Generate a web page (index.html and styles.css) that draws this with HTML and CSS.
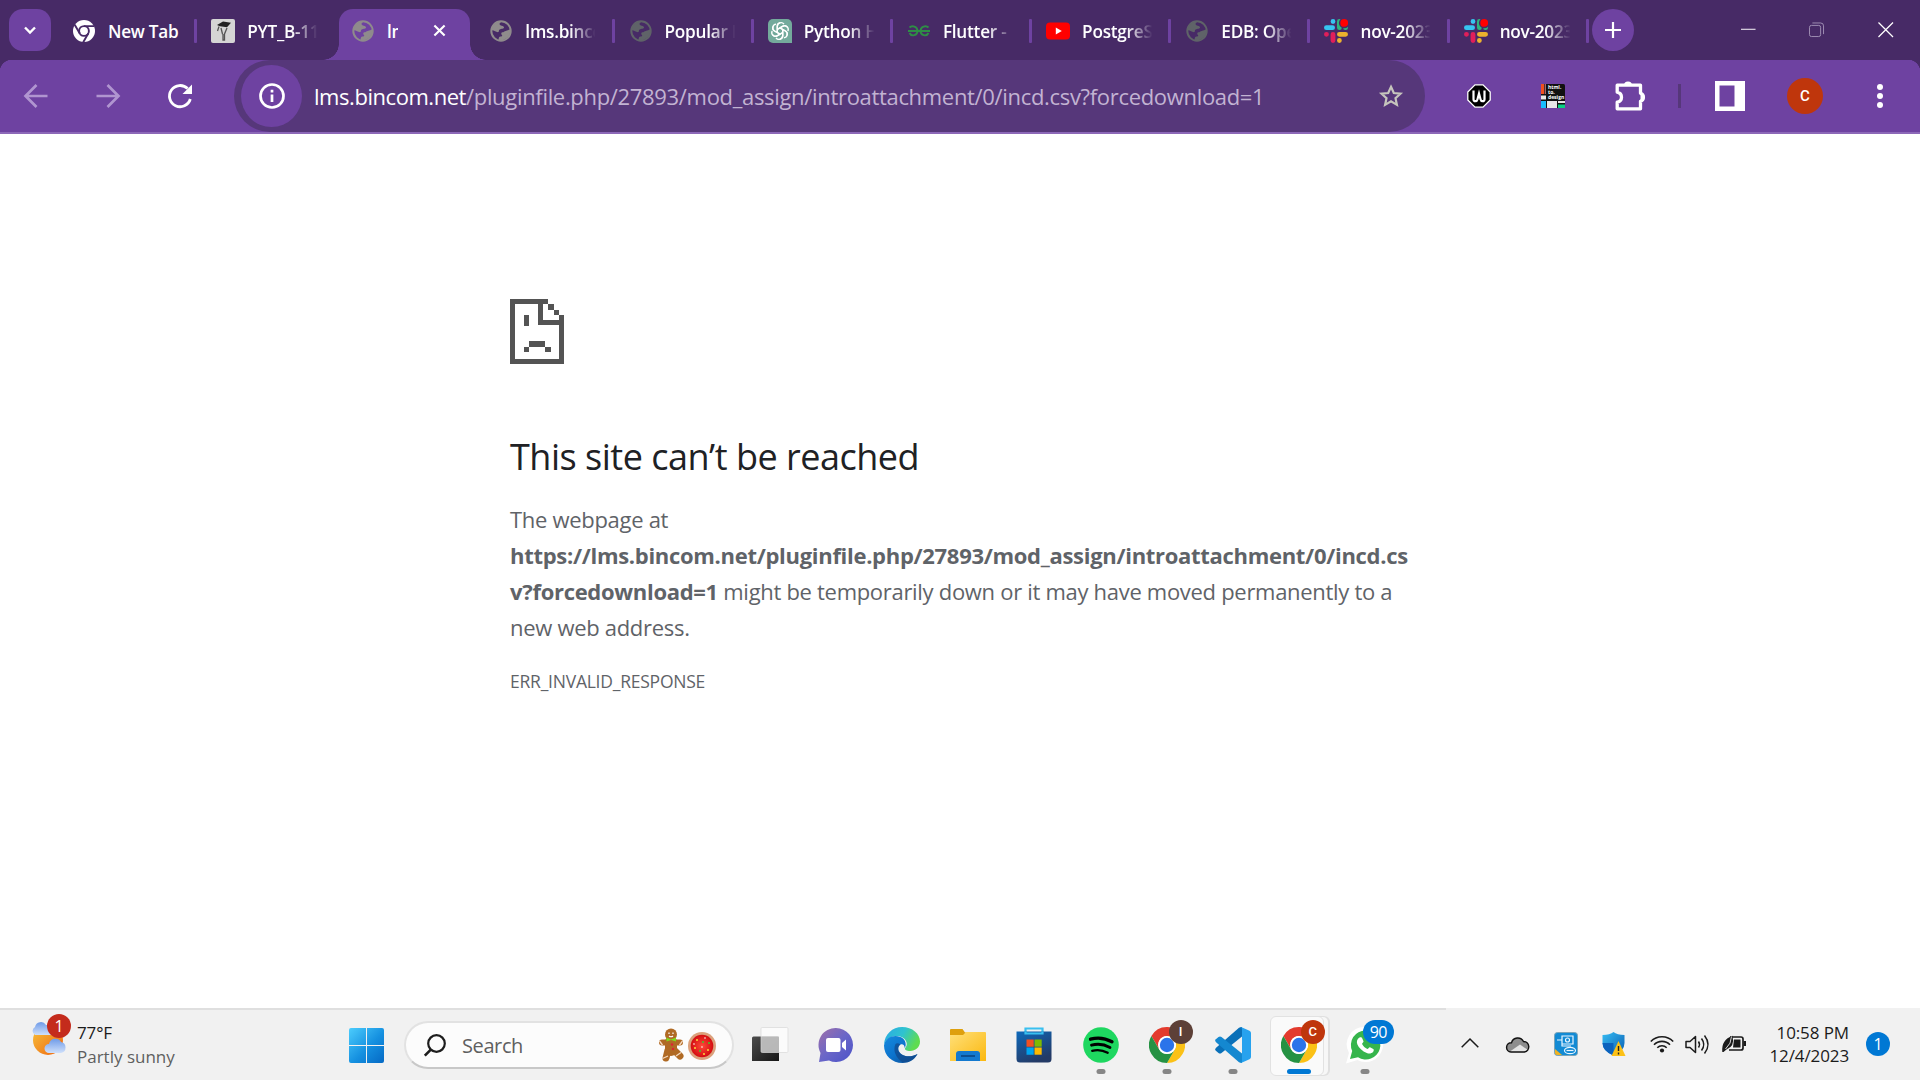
FILE: index.html
```html
<!DOCTYPE html>
<html lang="en">
<head>
<meta charset="utf-8">
<title>lms.bincom.net</title>
<link rel="stylesheet" href="styles.css">
</head>
<body>
<svg class="defs" width="0" height="0" aria-hidden="true">
  <defs>
    <linearGradient id="gWin" x1="0" y1="0" x2="1" y2="1"><stop offset="0" stop-color="#4ccdfd"/><stop offset=".55" stop-color="#1590e0"/><stop offset="1" stop-color="#0569c4"/></linearGradient>
    <linearGradient id="gSun" x1="0" y1="0" x2="1" y2="1"><stop offset="0" stop-color="#f7c33b"/><stop offset="1" stop-color="#ef6510"/></linearGradient>
    <linearGradient id="gCloud" x1="0" y1="0" x2="0" y2="1"><stop offset="0" stop-color="#6f9be8"/><stop offset="1" stop-color="#cfe0fb"/></linearGradient>
    <linearGradient id="gDark" x1="0" y1="0" x2="1" y2="1"><stop offset="0" stop-color="#4c4c4c"/><stop offset="1" stop-color="#161616"/></linearGradient>
    <linearGradient id="gTeams" x1="0" y1="0" x2="1" y2="1"><stop offset="0" stop-color="#a070a8"/><stop offset=".5" stop-color="#6a66c8"/><stop offset="1" stop-color="#4a52c8"/></linearGradient>
    <linearGradient id="gFolder" x1="0" y1="0" x2="1" y2="1"><stop offset="0" stop-color="#ffe07a"/><stop offset="1" stop-color="#fbb80f"/></linearGradient>
    <linearGradient id="gStore" x1="0" y1="0" x2=".5" y2="1"><stop offset="0" stop-color="#0d69bb"/><stop offset="1" stop-color="#243a66"/></linearGradient>
    <linearGradient id="gEdgeA" x1="0" y1="0" x2="1" y2=".4"><stop offset="0" stop-color="#2aa9e6"/><stop offset=".55" stop-color="#2fc3cf"/><stop offset="1" stop-color="#5fdc50"/></linearGradient>
    <linearGradient id="gEdgeB" x1="0" y1="0" x2="1" y2="1"><stop offset="0" stop-color="#168ade"/><stop offset=".5" stop-color="#0c72cc"/><stop offset="1" stop-color="#114a8b"/></linearGradient>
    <linearGradient id="gShield" x1="0" y1="0" x2="1" y2="1"><stop offset="0" stop-color="#36bdf3"/><stop offset="1" stop-color="#0a5cb2"/></linearGradient>
    <radialGradient id="gCookie"><stop offset="0" stop-color="#ff4a3a"/><stop offset="1" stop-color="#d40d10"/></radialGradient>
    <symbol id="globe" viewBox="0 0 22 22"><circle cx="11" cy="11" r="9.7" fill="none" stroke="currentColor" stroke-width="2"/><path d="M12.8 1.6C10 2 8.6 4 10.4 5.2c1.6 1 3.4.5 3.6 2.2.2 1.5-2.6 1.4-4.3 2-1.4.6-.2 2.200-1.5 2.700C6.500 12.700 4.600 10.200 1.500 10.300A9.600 9.600 0 0 1 12.800 1.600ZM20.400 9.600c-1.700 0-2.800 1.300-4.600 1.300-1.600 0-2 1.300-3.500 1.400-1.500.2-1.100 2.100-.4 2.800.8.900-.3 1.500-1.400 1.400-1.400-.1-2 1.400-1.800 3.500A9.700 9.700 0 0 0 20.400 9.600Z" fill="currentColor"/></symbol>
    <symbol id="slack" viewBox="0 0 24 24"><g stroke-width="4.8" stroke-linecap="round"><path d="M2.400 8.700h6.200M9 2.500v.1" stroke="#36c5f0"/><path d="M15.400 2.400v6.300M21.500 8.700h.1" stroke="#2eb67d"/><path d="M15.400 15.300h6.200M15.400 21.500v.1" stroke="#ecb22e"/><path d="M9 15.300v6.300M2.400 15.300h.1" stroke="#e01e5a"/></g><circle cx="20.200" cy="3.900" r="5.300" fill="#472a66"/><circle cx="20.200" cy="3.900" r="3.900" fill="#f00"/></symbol>
    <symbol id="chrome" viewBox="0 0 36 36"><path d="M2.410 9A18 18 0 0 1 33.590 9H18A9 9 0 0 0 10.200 13.500l0 9Z" fill="#e33b2e"/><path d="M33.590 9A18 18 0 0 1 18 36L25.800 22.500A9 9 0 0 0 25.800 13.500L18 9Z" fill="#fbc116"/><path d="M18 36A18 18 0 0 1 2.410 9L10.200 22.500A9 9 0 0 0 25.800 22.500Z" fill="#259243"/><circle cx="18" cy="18" r="9" fill="#fff"/><circle cx="18" cy="18" r="7.200" fill="#2b74ea"/></symbol>
  </defs>
</svg>

<header class="tabstrip">
  <div class="tab-search"><svg width="14" height="14" viewBox="0 0 14 14"><path d="m2 4.500 5 5 5-5" fill="none" stroke="#fff" stroke-width="2.400"/></svg></div>
  <nav class="tabs">
    <div class="tab"><svg class="fav" viewBox="0 0 22 22"><circle cx="11" cy="11" r="11" fill="#fff"/><g stroke="#472a66" stroke-width="1.900" fill="none"><circle cx="11" cy="11" r="4.900"/><path d="M11 6.100h10M6.800 13.500 1.700 4.700M15.200 13.500l-5 8.700"/></g></svg><span class="label full">New Tab</span></div>
    <div class="tab no-sep"><svg class="fav big" viewBox="0 0 24 24"><rect width="24" height="24" rx="2" fill="#d5d5d5"/><path d="m6 6 6-3.500 8 1.200-4 4.600-7-1Z" fill="#222"/><path d="M8 7.500 6.500 12M10 9l1.500 6M16 9l-2.500 6v6h-1.500v-6" stroke="#555" stroke-width="1.300" fill="none"/></svg><span class="label">PYT_B-11</span></div>
    <div class="tab active"><svg class="fav light"><use href="#globe"/></svg><span class="label tiny">lms</span><svg class="close" viewBox="0 0 14 14"><path d="m1.500 1.500 11 11m0-11-11 11" stroke="#fff" stroke-width="2.300"/></svg></div>
    <div class="tab"><svg class="fav light"><use href="#globe"/></svg><span class="label">lms.bincom</span></div>
    <div class="tab"><svg class="fav dim"><use href="#globe"/></svg><span class="label">Popular M</span></div>
    <div class="tab"><svg class="fav big" viewBox="0 0 24 24"><path d="M5 0h14a5 5 0 0 1 5 5v19H5a5 5 0 0 1-5-5V5a5 5 0 0 1 5-5Z" fill="#74aa9c"/><g fill="none" stroke="#fff" stroke-width="1.350"><path id="petal" d="M9.300 13.700V7.400a3.700 3.700 0 0 1 6.700-2.200M9.300 10.400l5.500-3.200a3.700 3.700 0 0 1 4.600.9"/><use href="#petal" transform="rotate(60 12 12)"/><use href="#petal" transform="rotate(120 12 12)"/><use href="#petal" transform="rotate(180 12 12)"/><use href="#petal" transform="rotate(240 12 12)"/><use href="#petal" transform="rotate(300 12 12)"/></g></svg><span class="label">Python H</span></div>
    <div class="tab"><svg class="fav" viewBox="0 0 22 22"><path d="M1.500 7.500C4 5 9.500 6.500 9.500 11S3.500 17 1.500 13M20.500 7.500C18 5 12.500 6.500 12.500 11s6 6 8 2M0 11h22" fill="none" stroke="#2f8d46" stroke-width="1.900"/></svg><span class="label">Flutter - </span></div>
    <div class="tab"><svg class="fav big" viewBox="0 0 24 24"><rect y="3.500" width="24" height="17" rx="4" fill="#f00"/><path d="m9.800 8.400 6 3.600-6 3.600Z" fill="#fff"/></svg><span class="label">PostgreSQ</span></div>
    <div class="tab"><svg class="fav dim"><use href="#globe"/></svg><span class="label">EDB: Open</span></div>
    <div class="tab"><svg class="fav big"><use href="#slack"/></svg><span class="label">nov-2023</span></div>
    <div class="tab"><svg class="fav big"><use href="#slack"/></svg><span class="label">nov-2023</span></div>
  </nav>
  <div class="new-tab"><svg width="16" height="16" viewBox="0 0 16 16"><path d="M8 0v16M0 8h16" stroke="#fff" stroke-width="2.200"/></svg></div>
  <div class="window-controls">
    <svg viewBox="0 0 16 16"><path d="M0 7.500h15" stroke="#fff" stroke-width="1"/></svg>
    <svg viewBox="0 0 16 16"><g fill="none" stroke="#a08fb5"><rect x=".5" y="3.500" width="11.500" height="11.500" rx="2"/><path d="M3.500 1H12q3 0 3 3v8.500"/></g></svg>
    <svg viewBox="0 0 16 16"><path d="m.5.500 15 15m0-15-15 15" stroke="#fff" stroke-width="1.300"/></svg>
  </div>
</header>

<section class="toolbar">
  <div class="nav-buttons">
    <svg viewBox="0 0 24 24"><path d="M23.500 12H2M12.500 1 1.500 12l11 11" fill="none" stroke="#b095d0" stroke-width="2.700"/></svg>
    <svg viewBox="0 0 24 24"><path d="M.5 12H22M11.500 1l11 11-11 11" fill="none" stroke="#b095d0" stroke-width="2.700"/></svg>
    <svg viewBox="0 0 24 24"><path d="M22.300 15A10.600 10.600 0 1 1 19.600 4.600" fill="none" stroke="#fff" stroke-width="2.800"/><path d="M24 .5v9.500h-9.500Z" fill="#fff"/></svg>
  </div>
  <div class="omnibox">
    <div class="site-info"><svg width="26" height="26" viewBox="0 0 26 26"><circle cx="13" cy="13" r="11.500" fill="none" stroke="#fff" stroke-width="2.700"/><path d="M13 11.500v7.500M13 6.800v2.700" stroke="#fff" stroke-width="2.700"/></svg></div>
    <span class="url"><span class="host">lms.bincom.net</span>/pluginfile.php/27893/mod_assign/introattachment/0/incd.csv?forcedownload=1</span>
    <svg class="star" viewBox="0 0 24 24"><path d="m12 2.800 2.800 6.200 6.700.7-5 4.500 1.400 6.700-5.900-3.500-5.900 3.500 1.400-6.700-5-4.500 6.700-.7Z" fill="none" stroke="#c6c5bd" stroke-width="2.200"/></svg>
  </div>
  <div class="extensions">
    <svg width="24" height="24" viewBox="0 0 24 24"><path d="M8 .8h8L23.200 8v8L16 23.200H8L.8 16V8Z" fill="#000" stroke="#fff" stroke-width="1.300"/><path d="M6.500 6.500v8.700q0 2 2 2 1.500 0 2-2L12 9.500l1.500 5.700q.5 2 2 2 2 0 2-2V6.500" fill="none" stroke="#fff" stroke-width="2.200"/></svg>
    <svg class="h2d" width="24" height="24" viewBox="0 0 24 24"><rect width="24" height="24" rx="1.500" fill="#111"/><path d="M0 0h3v10H0Z" fill="#f24e1e"/><path d="M3.600 0H5v10H3.600Z" fill="#a66"/><path d="M0 11.500h5v4H0ZM6 17h10v7H6ZM17 17h7v2h-7Z" fill="#e6e6e6"/><path d="M0 17h5v7H0Z" fill="#1abcfe"/><path d="M17 20.500h7V24h-7Z" fill="#0acf83"/><text x="7" y="5.200">html.</text><text x="7" y="9.800">to.</text><text x="7" y="14.800">design</text></svg>
    <svg width="30" height="30" viewBox="0 0 30 30"><path d="M3 4.200h22.500v8a4.200 4.200 0 0 1 0 8v7.600H2.200v-6.600q4.300-1 4.300-5t-4.300-5V4.200Z" fill="none" stroke="#fff" stroke-width="3.300" stroke-linejoin="round"/><path d="M9 4.500a4 4 0 0 1 8 0ZM25.500 12.200a4 4 0 0 1 0 8Z" fill="#fff"/></svg>
  </div>
  <div class="divider"></div>
  <div class="profile">
    <svg width="30" height="30" viewBox="0 0 30 30"><path fill="#fff" fill-rule="evenodd" d="M0 0h30v30H0ZM4.500 4.500v21h15v-21Z"/></svg>
    <span class="avatar">C</span>
    <svg width="6" height="24" viewBox="0 0 6 24"><g fill="#fff"><circle cx="3" cy="3" r="3"/><circle cx="3" cy="12" r="3"/><circle cx="3" cy="21" r="3"/></g></svg>
  </div>
</section>

<main class="page">
  <article class="error">
    <svg class="sad" viewBox="0 0 54 65" shape-rendering="crispEdges"><path fill="#545454" fill-rule="evenodd" d="M0 0h38v5h-5v16h16v-5h5v49H0ZM5 5v55h44V26H28V5Z"/><path fill="#545454" d="M38 5h5.500v5.500H38ZM43.500 10.500H49V16h-5.500ZM13.500 16H19v10.500h-5.500ZM19 42h16v5.500H19ZM13.500 47.500H19V53h-5.500ZM35 47.500h5.500V53H35Z"/></svg>
    <h1>This site can’t be reached</h1>
    <p class="message">The webpage at<br><strong>https://lms.bincom.net/pluginfile.php/27893/mod_assign/introattachment/0/incd.cs<br>v?forcedownload=1</strong> might be temporarily down or it may have moved permanently to a<br>new web address.</p>
    <p class="code">ERR_INVALID_RESPONSE</p>
  </article>
</main>

<footer class="taskbar">
  <div class="weather">
    <div class="weather-icon">
      <svg width="40" height="40" viewBox="0 0 40 40"><circle cx="18" cy="19" r="15" fill="url(#gSun)"/><path d="M5 14a4.500 4.500 0 0 1 0-8A6 6 0 0 1 16 4a5 5 0 0 1 6 5v5Z" fill="url(#gCloud)"/><path d="M19 32a4.500 4.500 0 0 1 0-9 6.500 6.500 0 0 1 12-2 5.600 5.600 0 0 1 0 11Z" fill="url(#gCloud)"/></svg>
      <span class="badge red">1</span>
    </div>
    <div class="weather-text"><span>77°F</span><span class="muted">Partly sunny</span></div>
  </div>
  <svg class="start" width="35" height="35" viewBox="0 0 35 35"><path fill="url(#gWin)" d="M2 0h15v17H0V2Q0 0 2 0ZM18 0h15q2 0 2 2v15H18ZM0 18h17v17H2q-2 0-2-2ZM18 18h17v15q0 2-2 2H18Z"/></svg>
  <div class="search">
    <svg width="22" height="23" viewBox="0 0 22 23"><circle cx="12.500" cy="9.500" r="8.300" fill="none" stroke="#1d1d1d" stroke-width="2.200"/><path d="m6.800 15.600-6 6" stroke="#1d1d1d" stroke-width="2.600"/></svg>
    <span>Search</span>
    <svg width="60" height="34" viewBox="0 0 60 34"><g stroke="#b06a24" stroke-linecap="round"><circle cx="13" cy="6.500" r="6" fill="#b06a24" stroke="none"/><path d="M4 14.500h18" stroke-width="6"/><path d="M13 14v8" stroke-width="12"/><path d="m10 22-2 8M16 22l6 6" stroke-width="7"/></g><path d="M4.500 30.500 10 28M18 28l5-3.500M1.500 13l3 4M24.500 13l-3 4" stroke="#f3d9c0" stroke-width="1.300"/><path d="m8.500 9.500 4.500 2 5-2v4l-5-1.500-4.500 1.500Z" fill="#7fdc1c"/><path d="M11 4.500v1.500M15 4.500v1.500M11 8q2 1.500 4 0" stroke="#fff" fill="none" stroke-width="1.200"/><circle cx="14" cy="16.500" r="1.200" fill="#d23"/><circle cx="15" cy="21" r="1.200" fill="#d23"/><circle cx="44" cy="18" r="14" fill="#dba17c"/><circle cx="44" cy="18" r="11.300" fill="url(#gCookie)"/><g fill="#ffd83b"><circle cx="39" cy="12" r="1"/><circle cx="50" cy="22" r="1"/><circle cx="37" cy="20" r="1"/><circle cx="46" cy="26" r="1"/></g><g fill="#45c72b"><circle cx="45" cy="14" r="1"/><circle cx="42" cy="23" r="1"/><circle cx="51" cy="15" r="1"/></g><g fill="#fff"><circle cx="47" cy="10" r=".8"/><circle cx="44" cy="19" r=".8"/><circle cx="36" cy="16" r=".8"/></g></svg>
  </div>
  <div class="apps">
    <div class="app"><svg viewBox="0 0 36 36"><path d="M0 11q0-1.500 1.500-1.500h24q1.500 0 1.500 1.500v23H0Z" fill="url(#gDark)"/><rect x="9" y=".5" width="27" height="25" rx="1.200" fill="#fff" fill-opacity=".7" stroke="#d8d8d8" stroke-width=".7"/><path d="M9.400 9.500H27v15.500H9.400Z" fill="#b5b5b5" opacity=".7"/></svg></div>
    <div class="app"><svg viewBox="0 0 36 36"><path d="M18 1a17 17 0 1 1-7 32.500L1 35l1.500-9A17 17 0 0 1 18 1Z" fill="url(#gTeams)"/><rect x="8" y="11" width="14.500" height="14" rx="2" fill="#fff"/><path d="m24 16 4-3.500v11L24 20Z" fill="#fff"/></svg></div>
    <div class="app"><svg viewBox="0 0 36 36"><path d="M0 18C.5 7 8.500 0 18 0c10.500 0 18 7 18 14.500 0 6-5 9.500-9.500 9.500-4.500 0-6-1.500-5.500-2.700C26 16 20 8.500 12 9 6 9.300 1.500 13 0 18Z" fill="url(#gEdgeA)"/><path d="M0 18.500C1 12 6.500 9 11.500 9c6.500 0 10.200 4 10.200 8.500 0 1.500-.5 2.800-1.200 3.500.5-3-2-4.500-4-3.500-2 1.200-3 4-1.500 7 2.500 5 11 6.500 18.500 2.500C30.500 33 25 36 18.500 36 8 36 0 28.500 0 18.500Z" fill="url(#gEdgeB)"/><path d="M11.500 17c-3 6.500.5 14 7.500 18.500 6-.5 11.500-3.500 14.500-8.500-7.500 4-16 2.500-18.500-2.500-1.500-3-.5-5.800 1.500-7-2-1.500-4-1.500-5-.5Z" fill="#124a8c" opacity=".75"/></svg></div>
    <div class="app"><svg viewBox="0 0 36 36"><path d="M0 3q0-1 1-1h11.500l2.500 3.500H34q2 0 2 2V10H0Z" fill="#dea00e"/><path d="M0 8h13l3-3h19q1 0 1 1v28H0Z" fill="url(#gFolder)"/><path d="M6 34v-7q0-3 3-3h18q3 0 3 3v7Z" fill="#1379cf"/><path d="M11 29h14" stroke="#0b4f92" stroke-width="2"/></svg></div>
    <div class="app"><svg viewBox="0 0 36 36"><path d="M9.500 7V1.500h17V7" fill="none" stroke="#39c0f0" stroke-width="2.200"/><path d="M.5 4.500h35V32q0 3.500-3.500 3.500H4Q.5 35.500.5 32Z" fill="url(#gStore)"/><path d="M9.500 4.500V6.500h17V4.500" fill="none" stroke="#39c0f0" stroke-width="2.200"/><path d="M10.500 12.500h7.200v7.200h-7.200Z" fill="#f25022"/><path d="M18.500 12.500h7.200v7.200h-7.200Z" fill="#7fba00"/><path d="M10.500 20.500h7.200v7.200h-7.200Z" fill="#00a4ef"/><path d="M18.500 20.500h7.200v7.200h-7.200Z" fill="#ffb900"/></svg></div>
    <div class="app running"><svg viewBox="0 0 36 36"><circle cx="18" cy="18" r="17.800" fill="#1ed760"/><g fill="none" stroke="#000" stroke-linecap="round"><path d="M7.500 12.200q11-3.200 21.500 2.600" stroke-width="3.300"/><path d="M8.500 18.200q9.500-2.700 18.500 2.300" stroke-width="2.800"/><path d="M9.200 23.800q8-2.200 15.500 2" stroke-width="2.300"/></g></svg></div>
    <div class="app running"><svg><use href="#chrome"/></svg><span class="badge brown">I</span></div>
    <div class="app running"><svg viewBox="0 0 36 36"><path d="M27 0v9.500L6.500 26q-1.500 1.200-3 0L.8 23.800q-1.500-1.300 0-2.800L24 .8Q25.500-.2 27 0Z" fill="#0a70b8"/><path d="M27 36v-9.500L6.500 10q-1.500-1.200-3 0L.8 12.200q-1.500 1.300 0 2.800L24 35.200q1.500 1 3 .8Z" fill="#1488d0"/><path d="m26 0 8.500 3.800q1.500.7 1.500 2.200v24q0 1.500-1.500 2.200L26 36q1-1 1-2.500v-31Q27 1 26 0Z" fill="#27a2ee"/></svg></div>
    <div class="app current"><svg><use href="#chrome"/></svg><span class="badge orange">C</span></div>
    <div class="app running"><svg viewBox="0 0 36 36"><path d="M18.500 0a17.500 17.500 0 1 1-8 33L-1 36.500 2 26A17.500 17.500 0 0 1 18.500 0Z" fill="#fff"/><path d="M18.500 3.500a14.500 14.500 0 1 1-7.500 26.700L3 32l2.200-8A14.500 14.500 0 0 1 18.500 3.500Z" fill="#36b54c"/><path d="M12.500 10.500c1.300-.7 2.300-.3 2.800 1l1.200 2.800c.3 1-1.700 2.200-1.400 2.800 1 2.200 3 4 5.200 5 .8.200 1.800-2.200 2.700-1.800l3.200 1.700c1 .6.600 2-.2 3-1.500 1.500-3.700 2-6.200 1-4.500-1.700-8-5-9.500-8.700-1-2.700-.3-5.300 2.200-6.800Z" fill="#fff"/></svg><span class="badge count">90</span></div>
  </div>
  <div class="tray">
    <svg class="up" width="18" height="10" viewBox="0 0 18 10"><path d="m.7 9.300 8.300-8.300 8.300 8.300" fill="none" stroke="#1b1b1b" stroke-width="1.500"/></svg>
    <svg class="cloud" width="24" height="17" viewBox="0 0 24 17"><path d="M5 16a4.500 4.500 0 0 1 .5-9.300A6.500 6.500 0 0 1 17.500 5.500 5.300 5.300 0 0 1 18.500 16Z" fill="#8e8e8e"/><path d="M4 15.500 14 8.500l8 5.500-4 2H5Z" fill="#e4e4e4"/><path d="M5 16a4.500 4.500 0 0 1 .5-9.300A6.500 6.500 0 0 1 17.500 5.500 5.300 5.300 0 0 1 18.500 16Z" fill="none" stroke="#111" stroke-width="1.400"/></svg>
    <svg class="intel" width="24" height="24" viewBox="0 0 24 24"><rect x=".5" y=".5" width="23" height="23" rx="3" fill="#128ad4" stroke="#7ba4b8"/><path d="M1 17l7 6H3q-2 0-2-2Z" fill="#f0b323"/><g fill="none" stroke="#e9f6ff" stroke-width="1.200"><path d="M8 4h11v8H8ZM3 8h5v6h9"/><circle cx="13.500" cy="8" r="2"/><ellipse cx="16" cy="18.500" rx="5.500" ry="3.200"/><path d="M12.500 18.500h7"/></g></svg>
    <svg class="shield" width="24" height="24" viewBox="0 0 24 24"><path d="M11.500 0Q15 3 22.500 3v8q0 8-11 12.500Q.5 19 .5 11V3Q8 3 11.500 0Z" fill="url(#gShield)"/><path d="M.5 11h11v12.500Q.5 19 .5 11Z" fill="#0b62bd"/><path d="m16.500 9 7 15h-14Z" fill="#fdc116"/><path d="M16.500 14v5M16.500 20.500v2" stroke="#222" stroke-width="1.400"/></svg>
    <svg class="wifi" width="24" height="18" viewBox="0 0 24 18"><g fill="none" stroke="#1b1b1b" stroke-width="1.600"><path d="M.8 6.500a15.500 15.500 0 0 1 22.400 0M4 9.800a11 11 0 0 1 16 0M7.300 12.800a6.500 6.500 0 0 1 9.400 0"/></g><circle cx="12" cy="15.500" r="2.100" fill="#1b1b1b"/></svg>
    <svg class="sound" width="24" height="21" viewBox="0 0 24 21"><g fill="none" stroke="#1b1b1b" stroke-width="1.500" stroke-linejoin="round"><path d="M1 7.500h4l5.500-5v16L5 13.500H1ZM13.500 7.500q2 3 0 6M16.500 4.500q4.500 6 0 12M19.500 1.500q7 9 0 18"/></g></svg>
    <svg class="battery" width="24" height="18" viewBox="0 0 24 18"><path d="M8 2h11q2 0 2 2v9q0 2-2 2H7" fill="none" stroke="#1b1b1b" stroke-width="1.700"/><path d="M12 4.500h6.500v8H11ZM21.500 6H24v5h-2.500Z" fill="#1b1b1b"/><path d="M.3 17Q-1 5 10.500.8 13 11.500 4.500 14.500L1.500 17Z" fill="#1b1b1b"/><path d="M9.500 1.500q0 7-6 12.500" fill="none" stroke="#f1f1f1" stroke-width=".9"/></svg>
    <div class="clock"><span>10:58 PM</span><span>12/4/2023</span></div>
    <span class="badge blue">1</span>
  </div>
</footer>
</body>
</html>
```
FILE: styles.css
```css
* { box-sizing: border-box; }
body {
  margin: 0;
  width: 1920px;
  height: 1080px;
  overflow: hidden;
  display: flex;
  flex-direction: column;
  background: #fff;
  font-family: "Open Sans", "Noto Sans", sans-serif;
}
.defs { position: absolute; }
svg { display: block; flex: none; overflow: visible; }

/* Tab strip */
.tabstrip {
  height: 60px;
  flex: none;
  display: flex;
  align-items: flex-start;
  padding: 9px 27px 0 9px;
  background: #472a66;
}
.tab-search, .new-tab {
  width: 42px;
  height: 42px;
  flex: none;
  display: grid;
  place-items: center;
  border-radius: 14px;
  background: #6e42a1;
}
.tab-search { margin-right: 7px; }
.new-tab { border-radius: 50%; margin-left: 3px; }
.tabs { display: flex; }
.tab {
  width: 139.2px;
  height: 51px;
  position: relative;
  display: flex;
  align-items: center;
  padding: 0 0 8px 50px;
}
.tab::after {
  content: "";
  position: absolute;
  right: 0;
  top: 10px;
  width: 3px;
  height: 24px;
  border-radius: 1px;
  background: #6e42a1;
}
.tab.no-sep::after { display: none; }
.fav { width: 22px; height: 22px; margin-left: -35px; margin-right: 13px; }
.fav.big { width: 24px; height: 24px; margin-left: -36px; margin-right: 12px; }
.light { color: #8f8b8c; }
.dim { color: #5f6368; }
.label {
  width: 72px;
  overflow: hidden;
  white-space: nowrap;
  color: #fff;
  font-size: 17.2px;
  font-weight: 600;
  letter-spacing: -0.25px;
  line-height: 24px;
  padding-top: 2px;
  -webkit-mask-image: linear-gradient(90deg, #000 62%, transparent 98%);
  mask-image: linear-gradient(90deg, #000 62%, transparent 98%);
}
.label.full { -webkit-mask-image: none; mask-image: none; }
.label.tiny { width: 11px; -webkit-mask-image: none; mask-image: none; }
.tab.active {
  width: 131px;
  margin: 0 5.4px 0 2.6px;
  padding-left: 48px;
  border-radius: 14px 14px 0 0;
  background: #6e42a1;
}
.tab.active::before, .tab.active::after {
  content: "";
  position: absolute;
  top: auto;
  bottom: 0;
  width: 16px;
  height: 16px;
  border-radius: 0;
}
.tab.active::before { left: -16px; background: radial-gradient(circle at 0 0, transparent 15.5px, #6e42a1 16px); }
.tab.active::after { right: -16px; background: radial-gradient(circle at 100% 0, transparent 15.5px, #6e42a1 16px); }
.close { width: 13px; height: 13px; margin-left: 35px; }
.window-controls { margin-left: auto; padding-top: 13px; display: flex; gap: 53px; }
.window-controls svg { width: 15.500px; height: 15.500px; }

/* Toolbar */
.toolbar {
  height: 74px;
  flex: none;
  display: flex;
  align-items: center;
  border-bottom: 2px solid #8c68b8;
  background: radial-gradient(circle at 12px 12px, #6e42a1 12px, #472a66 12.500px) 0 0 / 12px 12px no-repeat,
    radial-gradient(circle at 0 12px, #6e42a1 12px, #472a66 12.500px) 100% 0 / 12px 12px no-repeat,
    #6e42a1;
}
.nav-buttons { display: flex; gap: 48px; padding-left: 24px; }
.nav-buttons svg { width: 24px; height: 24px; }
.omnibox {
  width: 1191px;
  height: 72px;
  margin-left: 42px;
  padding: 0 22px 0 7px;
  display: flex;
  align-items: center;
  border-radius: 36px;
  background: #56377a;
}
.site-info {
  width: 61px;
  height: 62px;
  flex: none;
  display: grid;
  place-items: center;
  border-radius: 50%;
  background: #6e42a1;
}
.url { margin-left: 12px; font-size: 22px; letter-spacing: -0.32px; line-height: 30px; color: #c2b3d2; white-space: nowrap; }
.host { color: #fff; letter-spacing: -0.45px; }
.star { width: 24px; height: 24px; margin-left: auto; }
.extensions { display: flex; align-items: center; gap: 50px; padding-left: 42px; }
.extensions svg:first-child { margin-right: 0; }
.h2d text { font: 700 5px "Open Sans", sans-serif; fill: #fff; }
.divider { width: 3px; height: 24px; margin: 0 34px 0 33px; background: #56377a; }
.profile { display: flex; align-items: center; }
.avatar {
  width: 36px;
  height: 36px;
  margin: 0 54px 0 42px;
  border-radius: 50%;
  background: #bf360c;
  color: #fff;
  font: 500 15px/36px Roboto, sans-serif;
  text-align: center;
}

/* Error page */
.page { flex: 1; }
.error { width: 900px; margin: 165px 0 0 510px; }
.sad { width: 54px; height: 65px; }
.error h1 {
  margin: 69px 0 0;
  font-size: 36px;
  font-weight: 500;
  letter-spacing: -0.49px;
  line-height: 48px;
  color: #202124;
}
.message {
  margin: 20px 0 0;
  font-size: 22px;
  letter-spacing: -0.3px;
  line-height: 36px;
  color: #5f6368;
  white-space: nowrap;
}
.code { margin: 22px 0 0; font-size: 17.500px; letter-spacing: -0.23px; line-height: 28px; color: #5f6368; }

/* Taskbar */
.taskbar {
  height: 72px;
  flex: none;
  display: flex;
  align-items: center;
  background: linear-gradient(#dfdfdf, #dfdfdf) 0 0 / 1446px 2px no-repeat, #f1f1f1;
  color: #1b1b1b;
  font-size: 17px;
}
.weather { width: 349px; padding-left: 30px; display: flex; align-items: center; }
.weather-icon { position: relative; width: 40px; height: 40px; margin-top: -6px; }
.weather-text { margin-left: 7px; display: flex; flex-direction: column; line-height: 24px; margin-top: 2px; }
.weather-text span:first-child { letter-spacing: -0.15px; }
.muted { color: #5f5f5f; }
.start { margin: 3px 20px 0 0; }
.start { margin-left: 0; }
.search {
  width: 330px;
  height: 48px;
  margin-top: 2px;
  padding: 0 14px 0 18px;
  display: flex;
  align-items: center;
  border: 2px solid #e2e2e2;
  border-bottom-color: #c8c8c8;
  border-radius: 24px;
  background: #fcfcfc;
}
.search span { margin-left: 16px; margin-right: auto; font-size: 20px; letter-spacing: -0.4px; color: #5f5f5f; }
.apps { display: flex; padding-left: 3px; }
.app {
  width: 66.1px;
  height: 72px;
  position: relative;
  display: grid;
  place-items: center;
  padding-top: 2px;
}
.app > svg { width: 36px; height: 36px; position: relative; }
.app.running::after, .app.current::after {
  content: "";
  position: absolute;
  left: 50%;
  bottom: 6px;
  width: 9px;
  height: 5px;
  border-radius: 2.500px;
  transform: translateX(-50%);
  background: #868686;
}
.app.current::after { width: 24px; background: #0078d4; }
.app.current::before {
  content: "";
  position: absolute;
  left: 4px;
  top: 8px;
  width: 52px;
  height: 58px;
  border: 1px solid #e2e2e2;
  border-radius: 6px;
  background: #fafafa;
  box-shadow: 5px 0 0 -1px #f7f7f7, 6px 0 0 0 #e0e0e0;
}
.badge {
  height: 24px;
  min-width: 24px;
  display: grid;
  place-items: center;
  border-radius: 12px;
  color: #fff;
  font-size: 16px;
  line-height: 24px;
}
.weather-icon .badge, .app .badge { position: absolute; }
.red { left: 17px; top: -7px; background: #c42b1c; }
.brown, .orange { left: 35px; top: 12px; font: 500 13px/24px Roboto, sans-serif; }
.brown { background: #5d4037; }
.orange { background: #bf360c; }
.count { left: 31px; top: 12px; width: 31px; background: #0078d4; letter-spacing: -0.5px; }
.tray { margin-left: auto; display: flex; align-items: center; padding-right: 30px; }
.cloud { margin-left: 27px; }
.intel { margin-left: 24px; }
.shield { margin-left: 24px; }
.wifi { margin-left: 24px; }
.sound { margin-left: 11px; }
.battery { margin-left: 13px; }
.up { margin-top: -2px; }
.clock { width: 103px; display: flex; flex-direction: column; align-items: flex-end; line-height: 23px; letter-spacing: -0.1px; }
.blue { margin-left: 17px; background: #0078d4; }
```
